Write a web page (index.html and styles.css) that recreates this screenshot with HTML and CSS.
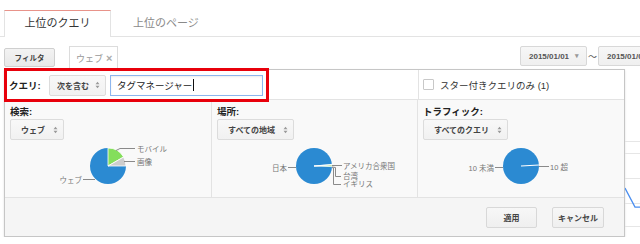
FILE: index.html
```html
<!DOCTYPE html>
<html lang="ja">
<head>
    <meta charset="UTF-8">
    <title>検索クエリ</title>
    <link rel="stylesheet" href="styles.css">
</head>
<body>
<div class="page">
    <div class="tabs">
        <div class="tab tab-active">上位のクエリ</div>
        <div class="tab">上位のページ</div>
    </div>

    <div class="toolbar">
        <div class="btn btn-filter">フィルタ</div>
        <div class="chip">ウェブ <span class="chip-x">×</span></div>
        <div class="dates">
            <div class="btn date">2015/01/01 <span class="caret">▾</span></div>
            <span class="tilde">〜</span>
            <div class="btn date">2015/01/01 <span class="caret">▾</span></div>
        </div>
    </div>

    <div class="main">
        <div class="panel">
            <div class="query-row">
                <div class="query-cell">
                    <div class="query-box">
                        <span class="query-label">クエリ:</span>
                        <div class="select select-query">次を含む
                            <svg class="arrows" width="5" height="8" viewBox="0 0 5 8"><path d="M0.5 3.2 L2.5 0.8 L4.5 3.2Z M0.5 4.8 L2.5 7.2 L4.5 4.8Z"/></svg>
                        </div>
                        <div class="input">タグマネージャー<span class="cursor"></span></div>
                    </div>
                </div>
                <div class="star-cell">
                    <span class="checkbox"></span>スター付きクエリのみ (1)
                </div>
            </div>

            <div class="charts">
                <div class="col col-1">
                    <div class="col-label">検索:</div>
                    <div class="select">ウェブ
                        <svg class="arrows" width="5" height="8" viewBox="0 0 5 8"><path d="M0.5 3.2 L2.5 0.8 L4.5 3.2Z M0.5 4.8 L2.5 7.2 L4.5 4.8Z"/></svg>
                    </div>
                    <svg class="chart" width="196" height="50" viewBox="0 0 196 50">
                        <path class="slice-blue" d="M98 20 L116 20 A18 18 0 1 1 98 2 Z"/>
                        <path class="slice-green" d="M98 20 L98 2 A18 18 0 0 1 113.6 11 Z"/>
                        <path class="slice-gray" d="M98 20 L113.6 11 A18 18 0 0 1 116 20 Z"/>
                        <polyline class="leader" points="106,4.5 110,2.5 125,2.5"/>
                        <polyline class="leader" points="114,15.5 125,15.5"/>
                        <polyline class="leader" points="73,33.5 85,33.5"/>
                        <text x="127" y="5.5">モバイル</text>
                        <text x="127" y="18.5">画像</text>
                        <text x="72" y="36.5" text-anchor="end">ウェブ</text>
                    </svg>
                </div>
                <div class="col col-2">
                    <div class="col-label">場所:</div>
                    <div class="select">すべての地域
                        <svg class="arrows" width="5" height="8" viewBox="0 0 5 8"><path d="M0.5 3.2 L2.5 0.8 L4.5 3.2Z M0.5 4.8 L2.5 7.2 L4.5 4.8Z"/></svg>
                    </div>
                    <svg class="chart" width="196" height="50" viewBox="0 0 196 50">
                        <circle class="slice-blue" cx="97" cy="20" r="18"/>
                        <path class="slice-green" d="M97 20 L114.96 18.74 A18 18 0 0 1 114.99 20.6 Z"/>
                        <line class="slice-line" x1="97" y1="20" x2="115" y2="18.7"/>
                        <polyline class="leader" points="71,21.5 79,21.5"/>
                        <polyline class="leader" points="115,19.5 125,19.5"/>
                        <polyline class="leader" points="115,21 118.5,21.5 118.5,30.5 124,30.5"/>
                        <polyline class="leader" points="115,21.5 116.5,22 116.5,38.5 124,38.5"/>
                        <text x="70" y="24.5" text-anchor="end">日本</text>
                        <text x="126" y="22.5">アメリカ合衆国</text>
                        <text x="126" y="32.5">台湾</text>
                        <text x="126" y="41">イギリス</text>
                    </svg>
                </div>
                <div class="col col-3">
                    <div class="col-label">トラフィック:</div>
                    <div class="select">すべてのクエリ
                        <svg class="arrows" width="5" height="8" viewBox="0 0 5 8"><path d="M0.5 3.2 L2.5 0.8 L4.5 3.2Z M0.5 4.8 L2.5 7.2 L4.5 4.8Z"/></svg>
                    </div>
                    <svg class="chart" width="196" height="50" viewBox="0 0 196 50">
                        <circle class="slice-blue" cx="98" cy="20" r="18"/>
                        <line class="slice-line" x1="98" y1="20" x2="116" y2="19"/>
                        <polyline class="leader" points="72,21.5 80,21.5"/>
                        <polyline class="leader" points="116,20.5 126,20.5"/>
                        <text x="71" y="24.5" text-anchor="end">10 未満</text>
                        <text x="127" y="23.5">10 超</text>
                    </svg>
                </div>
            </div>

            <div class="actions">
                <div class="btn action">適用</div>
                <div class="btn action">キャンセル</div>
            </div>
        </div>

        <svg class="bg-chart" width="55" height="168" viewBox="0 0 55 168">
            <line x1="0" y1="72.5" x2="55" y2="72.5"/>
            <line x1="0" y1="84.5" x2="55" y2="84.5"/>
            <line x1="0" y1="109.5" x2="55" y2="109.5"/>
            <line x1="0" y1="134.5" x2="55" y2="134.5"/>
            <line x1="0" y1="157.5" x2="55" y2="157.5"/>
            <polyline class="trend" points="0,119 10,138 55,139"/>
        </svg>
    </div>
</div>
</body>
</html>
```

FILE: styles.css
```css
html, body {
    overflow: hidden;
}
body {
    margin: 0;
    background: #fff;
    color: #333;
    font-family: "Liberation Sans", "Noto Sans CJK JP", sans-serif;
}
.page {
    width: 680px;
}

/* tabs */
.tabs {
    display: flex;
    height: 26px;
    padding: 10px 0 0 4px;
    border-bottom: 1px solid #e3e3e3;
}
.tab {
    padding: 0 22px;
    font-size: 11px;
    line-height: 26px;
    color: #8a8a8a;
}
.tab-active {
    box-sizing: border-box;
    width: 107px;
    height: 27px;
    margin-bottom: -1px;
    padding: 0;
    background: #fff;
    border: 1px solid #e3e3e3;
    border-top-color: #e8938a;
    border-bottom: 0;
    color: #333;
    text-align: center;
    line-height: 25px;
}

/* toolbar */
.toolbar {
    display: flex;
    align-items: flex-start;
    height: 32px;
    padding: 0 15px 0 4px;
}
.btn {
    display: flex;
    align-items: center;
    justify-content: center;
    box-sizing: border-box;
    background: linear-gradient(#f7f7f7, #efefef);
    border: 1px solid #d8d8d8;
    border-radius: 2px;
    font-size: 8px;
    font-weight: bold;
    color: #444;
    white-space: nowrap;
}
.btn-filter {
    width: 51px;
    height: 19px;
    margin-top: 11px;
    border-color: #cfcfcf;
    background: linear-gradient(#f3f3f3, #e8e8e8);
    font-size: 7.5px;
}
.chip {
    display: flex;
    align-items: center;
    box-sizing: border-box;
    width: 49px;
    height: 23px;
    margin: 9px 0 0 14px;
    padding-left: 6px;
    background: #fff;
    border: 1px solid #dcdcdc;
    border-bottom: 0;
    font-size: 9px;
    color: #999;
}
.chip-x {
    margin-left: 3px;
    font-size: 11px;
    font-weight: bold;
    color: #aaa;
}
.dates {
    display: flex;
    align-items: center;
    margin: 9px 0 0 auto;
}
.date {
    width: 67px;
    height: 20px;
    justify-content: flex-start;
    padding-left: 8px;
    color: #555;
}
.caret {
    margin-left: 6px;
    font-size: 7px;
    color: #999;
}
.tilde {
    width: 11px;
    font-size: 9px;
    color: #555;
    text-align: center;
}

/* filter panel */
.main {
    display: flex;
    padding-left: 4px;
}
.panel {
    box-sizing: border-box;
    width: 621px;
    height: 168px;
    background: #f9f9f9;
    border: 1px solid #c6c6c6;
    box-shadow: 0 1px 2px rgba(0, 0, 0, 0.12);
}
.query-row {
    display: flex;
    height: 29px;
    background: #fff;
    border-bottom: 1px solid #e3e3e3;
}
.query-cell {
    width: 413px;
    border-right: 1px solid #e3e3e3;
}
.query-box {
    position: relative;
    z-index: 1;
    display: flex;
    align-items: center;
    gap: 4px;
    box-sizing: border-box;
    width: 265px;
    height: 34px;
    margin: -2px 0 0 -1px;
    padding: 0 3px 0 2px;
    border: 3px solid #e8000b;
}
.query-label {
    width: 36px;
    font-size: 9.5px;
    font-weight: bold;
    color: #222;
}
.select {
    display: inline-flex;
    align-items: center;
    gap: 8px;
    box-sizing: border-box;
    height: 21px;
    padding: 0 5px 0 10px;
    background: linear-gradient(#f8f8f8, #f1f1f1);
    border: 1px solid #dcdcdc;
    border-radius: 2px;
    font-size: 8px;
    font-weight: bold;
    color: #444;
    white-space: nowrap;
}
.select-query {
    width: 57px;
    gap: 6px;
    padding: 0 4px 0 7px;
}
.arrows {
    flex-shrink: 0;
    fill: #999;
}
.input {
    display: flex;
    align-items: center;
    box-sizing: border-box;
    width: 153px;
    height: 21px;
    padding-left: 6px;
    background: #fff;
    border: 1px solid #8db6ee;
    box-shadow: inset 0 1px 2px rgba(0, 0, 0, 0.08);
    font-size: 9.5px;
    color: #222;
}
.cursor {
    width: 1px;
    height: 12px;
    margin-left: 1px;
    background: #111;
}
.star-cell {
    display: flex;
    align-items: center;
    padding-left: 4px;
    font-size: 9.5px;
    color: #333;
}
.checkbox {
    width: 9px;
    height: 9px;
    margin-right: 6px;
    background: #fff;
    border: 1px solid #c8c8c8;
    border-radius: 1px;
}

/* chart columns */
.charts {
    display: flex;
    height: 97px;
    border-bottom: 1px solid #e3e3e3;
}
.col {
    box-sizing: border-box;
    padding: 6px 5px 0;
}
.col-1 {
    width: 208px;
    border-right: 1px solid #e3e3e3;
}
.col-2 {
    width: 206px;
    border-right: 1px solid #e3e3e3;
}
.col-3 {
    flex: 1;
}
.col-label {
    font-size: 9.5px;
    font-weight: bold;
    line-height: 12px;
    color: #222;
}
.col .select {
    margin-top: 1px;
}
.chart {
    display: block;
    margin-top: 6px;
}
.chart text {
    font-size: 7.5px;
    fill: #777;
}
.slice-blue {
    fill: #2b8ad2;
}
.slice-green {
    fill: #84de5c;
    stroke: #fff;
    stroke-width: 0.8;
}
.slice-gray {
    fill: #cdcdcd;
    stroke: #fff;
    stroke-width: 0.8;
}
.slice-line {
    stroke: #fff;
    stroke-width: 1.2;
}
.leader {
    fill: none;
    stroke: #8a8a8a;
    stroke-width: 1;
}

/* buttons */
.actions {
    display: flex;
    justify-content: flex-end;
    align-items: center;
    gap: 15px;
    height: 38px;
    padding-right: 20px;
    background: #f5f5f5;
}
.action {
    width: 51px;
    height: 21px;
}
.action + .action {
    width: 52px;
}

/* chart behind the panel */
.bg-chart line {
    stroke: #e6e6e6;
    stroke-width: 1;
}
.bg-chart .trend {
    fill: none;
    stroke: #4a8ef0;
    stroke-width: 1.3;
}
```
